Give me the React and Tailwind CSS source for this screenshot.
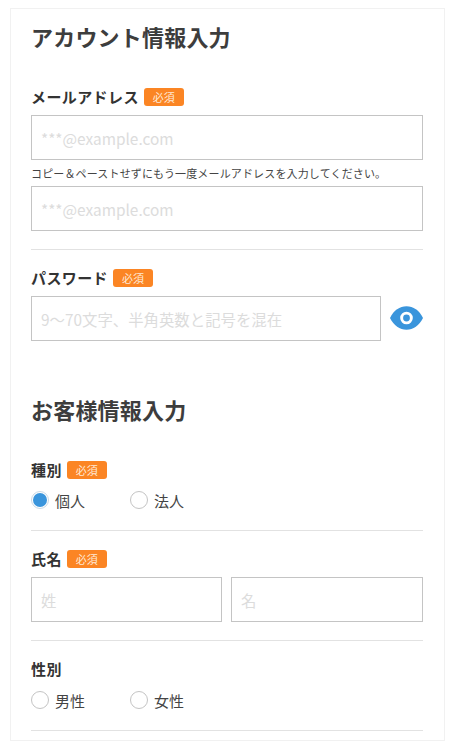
import React from "react";

const font = { fontFamily: '"Noto Sans CJK JP", "Noto Sans", sans-serif' };

const Badge = () => (
  <span className="inline-flex h-[18px] w-10 items-center justify-center rounded-[3px] bg-[#fb8524] text-[11px] text-[#ffe9d6]">
    必須
  </span>
);

const Label = ({ children, required }) => (
  <div className="flex h-[18px] items-center gap-[5px]">
    <span className="-mt-px text-[15px] font-bold leading-none tracking-[0.4px] text-[#333333]">{children}</span>
    {required && <Badge />}
  </div>
);

const Field = ({ placeholder, className = "" }) => (
  <input
    readOnly
    placeholder={placeholder}
    className={`h-[45px] min-w-0 border border-[#c4c4c4] bg-white px-[9px] text-[15.4px] outline-none placeholder:text-[#dcdcdc] ${className}`}
  />
);

const Radio = ({ label, checked, className = "" }) => (
  <label className={`flex items-center gap-[6px] ${className}`}>
    {checked ? (
      <span className="flex h-[18px] w-[18px] items-center justify-center rounded-full border border-[#c9d9e6] bg-white">
        <span className="h-[14px] w-[14px] rounded-full bg-[#3a95dc]" />
      </span>
    ) : (
      <span className="h-[18px] w-[18px] rounded-full border border-[#c4c4c4] bg-white" />
    )}
    <span className="text-[15px] leading-none text-[#444444]">{label}</span>
  </label>
);

const Divider = () => <div className="h-px bg-[#e2e2e2]" />;

const EyeIcon = () => (
  <svg width="33" height="24" viewBox="0 0 34 24" className="mb-[2px] shrink-0">
    <path d="M0 12C4 4 10 0 17 0s13 4 17 12c-4 8-10 12-17 12S4 20 0 12Z" fill="#3a95dc" />
    <circle cx="17" cy="12" r="5" fill="none" stroke="#ffffff" strokeWidth="3" />
  </svg>
);

export default function App() {
  return (
    <div className="h-[750px] overflow-hidden bg-white pl-[10px] pr-[10px] pt-2" style={font}>
      <div className="h-[733px] overflow-hidden border border-[#f1f1f1] bg-white pl-5 pr-[21px]">
        <h2 className="mt-[11px] text-[22px] font-bold leading-8 tracking-[0.2px] text-[#3d3d3d]">アカウント情報入力</h2>

        <div className="mt-[36px]">
          <Label required>メールアドレス</Label>
        </div>
        <Field placeholder="***@example.com" className="mt-[9px] block w-full" />
        <p className="mt-[6px] text-[11px] leading-[14px] tracking-[0.15px] text-[#444444]">
          コピー＆ペーストせずにもう一度メールアドレスを入力してください。
        </p>
        <Field placeholder="***@example.com" className="mt-[6px] block w-full" />
        <div className="mt-[18px]">
          <Divider />
        </div>

        <div className="mt-[19px]">
          <Label required>パスワード</Label>
        </div>
        <div className="mt-[9px] flex items-center justify-between">
          <Field placeholder="9〜70文字、半角英数と記号を混在" className="w-[350px]" />
          <EyeIcon />
        </div>

        <h2 className="mt-[52px] text-[22px] font-bold leading-8 tracking-[0.2px] text-[#3d3d3d]">お客様情報入力</h2>

        <div className="mt-[36px]">
          <Label required>種別</Label>
        </div>
        <div className="mt-[12px] flex">
          <Radio label="個人" checked className="w-[99px]" />
          <Radio label="法人" />
        </div>
        <div className="mt-[21px]">
          <Divider />
        </div>

        <div className="mt-[19px]">
          <Label required>氏名</Label>
        </div>
        <div className="mt-[9px] grid grid-cols-[191px_1fr] gap-[9px]">
          <Field placeholder="姓" className="w-full" />
          <Field placeholder="名" className="w-full" />
        </div>
        <div className="mt-[18px]">
          <Divider />
        </div>

        <div className="mt-[19px]">
          <Label>性別</Label>
        </div>
        <div className="mt-[13px] flex">
          <Radio label="男性" className="w-[99px]" />
          <Radio label="女性" />
        </div>
        <div className="mt-[21px]">
          <Divider />
        </div>
      </div>
    </div>
  );
}
